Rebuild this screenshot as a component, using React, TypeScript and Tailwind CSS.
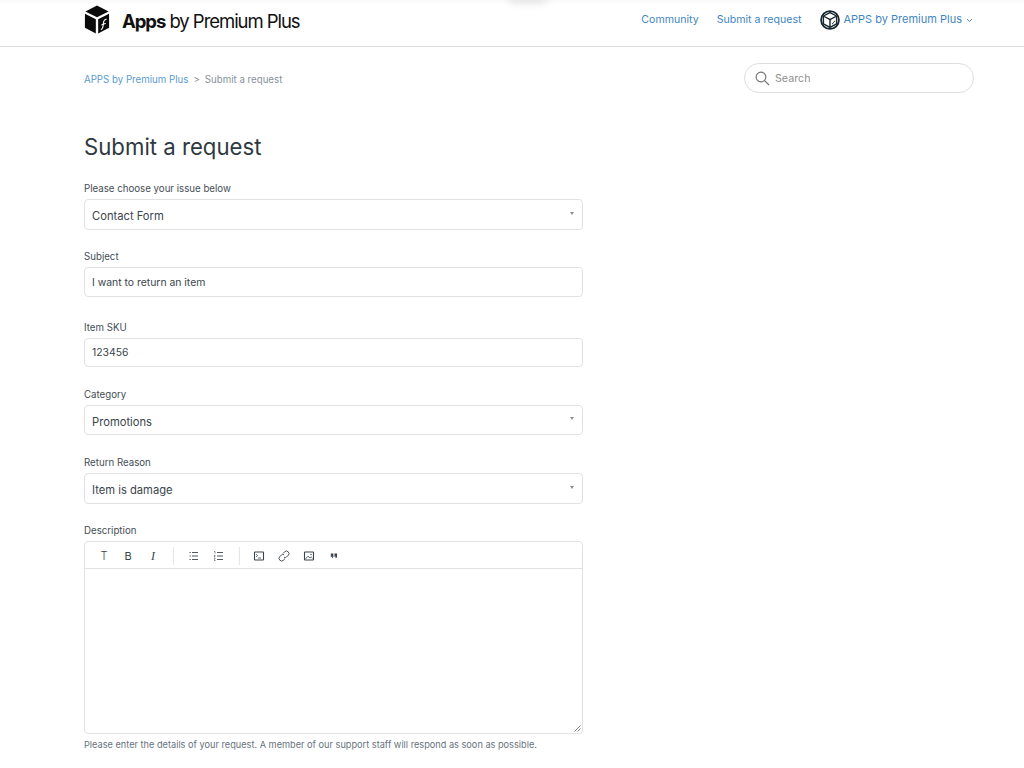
import React, { JSX } from "react";

function CubeLogo(): JSX.Element {
  return (
    <svg width="26" height="29" viewBox="0 0 26 30" className="block mb-[8px]">
      <path d="M13 0.5 L25 6.6 L13 12.6 L1 6.6 Z" fill="#0b0b0b" />
      <path d="M0.5 9 L11.8 14.8 L11.8 29.5 L0.5 23.6 Z" fill="#0b0b0b" />
      <path d="M14.2 14.8 L25.5 9 L25.5 23.6 L14.2 29.5 Z" fill="#0b0b0b" />
      <path d="M17 25.6 C19 25 19.2 23 19.4 21 L19.8 17.5 C20 16 21 15 22.8 14.6" stroke="#fff" strokeWidth="1.1" fill="none" />
      <path d="M17.6 20.6 L22 18.8" stroke="#fff" strokeWidth="1.1" fill="none" />
    </svg>
  );
}

function RoundCube(): JSX.Element {
  return (
    <svg width="20" height="20" viewBox="0 0 20 20" fill="none" stroke="#17262c" className="block">
      <circle cx="10" cy="10" r="8.9" strokeWidth="1.8" />
      <path d="M10 2.6 L16.6 6 L10 9.6 L3.4 6 Z" strokeWidth="1.4" strokeLinejoin="round" />
      <path d="M3.4 6 V13.8 L10 17.4 V9.6 M16.6 6 V13.8 L10 17.4" strokeWidth="1.4" strokeLinejoin="round" />
      <path d="M12 14 C13.6 13.6 13.4 11.6 15 11" strokeWidth="1" />
    </svg>
  );
}

function Field({ label, children, className }: { label: string; children: React.ReactNode; className: string }): JSX.Element {
  return (
    <div className={className}>
      <label className="block text-[9.7px] leading-[14px] text-[#444e56] mb-[3px]">{label}</label>
      {children}
    </div>
  );
}

function SelectBox({ value, h, pt }: { value: string; h: string; pt: string }): JSX.Element {
  return (
    <div className={`flex items-center justify-between ${h} border border-[#e2e2e2] rounded-[4px] px-[7px] text-[11.2px] text-[#3a444c]`}>
      <span className={pt}>{value}</span>
      <span className="w-0 h-0 border-l-[2px] border-r-[2px] border-t-[3px] border-l-transparent border-r-transparent border-t-[#8a8f94] mr-[1px] mb-[3px]" />
    </div>
  );
}

function TextBox({ value, h, pt }: { value: string; h: string; pt: string }): JSX.Element {
  return (
    <div className={`flex items-center ${h} ${pt} border border-[#e2e2e2] rounded-[4px] pl-[7px] text-[10.4px] text-[#3a444c]`}>
      {value}
    </div>
  );
}

function Toolbar(): JSX.Element {
  const stroke = "#3a444c";
  return (
    <div className="flex items-center h-[27px] pt-[2px] border-b border-[#e2e2e2] pl-[12px]">
      <span className="w-[14px] text-center text-[11px] font-light text-[#3a444c]">T</span>
      <span className="w-[14px] ml-[10px] text-center text-[11px] text-[#3a444c]">B</span>
      <span className="w-[14px] ml-[11px] text-center text-[12px] italic text-[#3a444c]" style={{ fontFamily: "'Liberation Serif', serif" }}>I</span>
      <span className="w-px h-[18px] bg-[#e6e6e6] ml-[13px]" />
      <svg width="12" height="12" viewBox="0 0 12 12" fill="none" stroke={stroke} strokeWidth="0.9" className="ml-[14px]">
        <path d="M4 2.5 H10 M4 6 H10 M4 9.5 H10 M1.5 2.5 H2.8 M1.5 6 H2.8 M1.5 9.5 H2.8" />
      </svg>
      <svg width="12" height="12" viewBox="0 0 12 12" fill="none" stroke={stroke} strokeWidth="0.9" className="ml-[13px]">
        <path d="M4 2.5 H10 M4 6 H10 M4 9.5 H10" />
        <path d="M1 1.5 H2 V3.6 M1 5.4 H2.2 L1 7 H2.4 M1 8.6 H2.2 L1.4 9.5 L2.2 10.5 H1" strokeWidth="0.6" />
      </svg>
      <span className="w-px h-[18px] bg-[#e6e6e6] ml-[14px]" />
      <svg width="12" height="12" viewBox="0 0 12 12" fill="none" stroke={stroke} className="ml-[13px]">
        <rect x="1.5" y="2" width="9" height="8" rx="0.6" strokeWidth="1.1" />
        <path d="M3 4.2 L4.6 5.6 L3 7 M5 8 H8" strokeWidth="0.8" />
      </svg>
      <svg width="12" height="12" viewBox="0 0 12 12" fill="none" stroke={stroke} strokeWidth="0.9" className="ml-[13px]">
        <path d="M5 3.4 L6.6 1.8 A2 2 0 0 1 10.2 5.4 L8.6 7 A2 2 0 0 1 6 7.2" />
        <path d="M7 8.6 L5.4 10.2 A2 2 0 0 1 1.8 6.6 L3.4 5 A2 2 0 0 1 6 4.8" />
      </svg>
      <svg width="12" height="12" viewBox="0 0 12 12" fill="none" stroke={stroke} className="ml-[13px]">
        <rect x="1.5" y="2" width="9" height="8" rx="0.6" strokeWidth="1.1" />
        <path d="M2.4 9 L5 6.2 L7 8 L8.2 7 L9.6 8.4" strokeWidth="0.8" />
        <circle cx="8" cy="4.4" r="0.7" fill={stroke} stroke="none" />
      </svg>
      <svg width="8" height="8" viewBox="0 0 10 10" fill={stroke} className="ml-[15px]">
        <path d="M1 2 H4.2 V5.6 C4.2 7 3.4 7.6 2.2 7.8 V6.8 C2.8 6.7 3 6.4 3 5.8 H1 Z" />
        <path d="M5.6 2 H8.8 V5.6 C8.8 7 8 7.6 6.8 7.8 V6.8 C7.4 6.7 7.6 6.4 7.6 5.8 H5.6 Z" />
      </svg>
    </div>
  );
}

export default function App(): JSX.Element {
  return (
    <div className="relative h-[768px] overflow-hidden bg-white" style={{ fontFamily: "Inter, sans-serif" }}>
      <div className="absolute left-[508px] top-[-10px] w-[40px] h-[13px] rounded-full bg-[#e4e4e4] blur-[4px]" />

      <header className="flex items-center justify-between h-[47px] border-b border-[#dcdcdc] pl-[84px] pr-[51px] bg-gradient-to-b from-[#f9f9f9] to-white to-[12%]">
        <div className="flex items-center">
          <CubeLogo />
          <div className="ml-[12px] mb-[4px] text-[18.5px] leading-none tracking-[-1.05px] text-[#111]">
            <span className="font-bold">Apps</span> by Premium Plus
          </div>
        </div>
        <nav className="flex items-center text-[10.6px] text-[#3f85c1] mb-[7px]">
          <a>Community</a>
          <a className="ml-[18px]">Submit a request</a>
          <div className="flex items-center ml-[19px]">
            <RoundCube />
            <span className="ml-[3px] text-[11px]">APPS by Premium Plus</span>
            <svg width="7" height="5" viewBox="0 0 7 5" fill="none" stroke="#3f85c1" strokeWidth="0.9" className="ml-[4px] mt-[1px]">
              <path d="M1 1 L3.5 3.5 L6 1" />
            </svg>
          </div>
        </nav>
      </header>

      <main className="pl-[84px] pr-[50px]">
        <div className="flex items-center justify-between mt-[16px]">
          <div className="text-[9.7px] pt-[4px] text-[#5f6b75]">
            <a className="text-[#5a9ad1]">APPS by Premium Plus</a>
            <span className="mx-[5px] text-[#848b92]">&gt;</span>
            <span className="text-[#87929d]">Submit a request</span>
          </div>
          <div className="flex items-center w-[230px] h-[30px] border border-[#dedede] rounded-full pl-[10px]">
            <svg width="15" height="15" viewBox="0 0 15 15" fill="none" stroke="#707070" strokeWidth="1.1">
              <circle cx="6" cy="6" r="4.9" />
              <path d="M9.6 9.6 L14 14" />
            </svg>
            <span className="ml-[5px] pt-[2px] text-[10.7px] text-[#8f8f8f]">Search</span>
          </div>
        </div>

        <h1 className="mt-[36px] text-[22.2px] leading-[36px] font-normal text-[#2f3941]">Submit a request</h1>

        <form className="w-[499px]">
          <Field label="Please choose your issue below" className="mt-[17px]">
            <SelectBox value="Contact Form" h="h-[31px]" pt="pt-[3px]" />
          </Field>
          <Field label="Subject" className="mt-[20px]">
            <TextBox value="I want to return an item" h="h-[30px]" pt="pt-[2px]" />
          </Field>
          <Field label="Item SKU" className="mt-[24px]">
            <TextBox value="123456" h="h-[29px]" pt="pt-0" />
          </Field>
          <Field label="Category" className="mt-[21px]">
            <SelectBox value="Promotions" h="h-[30px]" pt="pt-[4px]" />
          </Field>
          <Field label="Return Reason" className="mt-[21px]">
            <SelectBox value="Item is damage" h="h-[31px]" pt="pt-[3px]" />
          </Field>
          <Field label="Description" className="mt-[20px]">
            <div className="relative h-[193px] border border-[#e2e2e2] rounded-[4px]">
              <Toolbar />
              <svg width="7" height="7" viewBox="0 0 7 7" stroke="#666" strokeWidth="0.8" className="absolute right-[1px] bottom-[1px]">
                <path d="M0.5 6.5 L6.5 0.5 M3.5 6.5 L6.5 3.5" />
              </svg>
            </div>
          </Field>
          <p className="mt-[4px] w-[560px] text-[9.2px] leading-[14px] text-[#68737d]">
            Please enter the details of your request. A member of our support staff will respond as soon as possible.
          </p>
        </form>
      </main>
    </div>
  );
}
